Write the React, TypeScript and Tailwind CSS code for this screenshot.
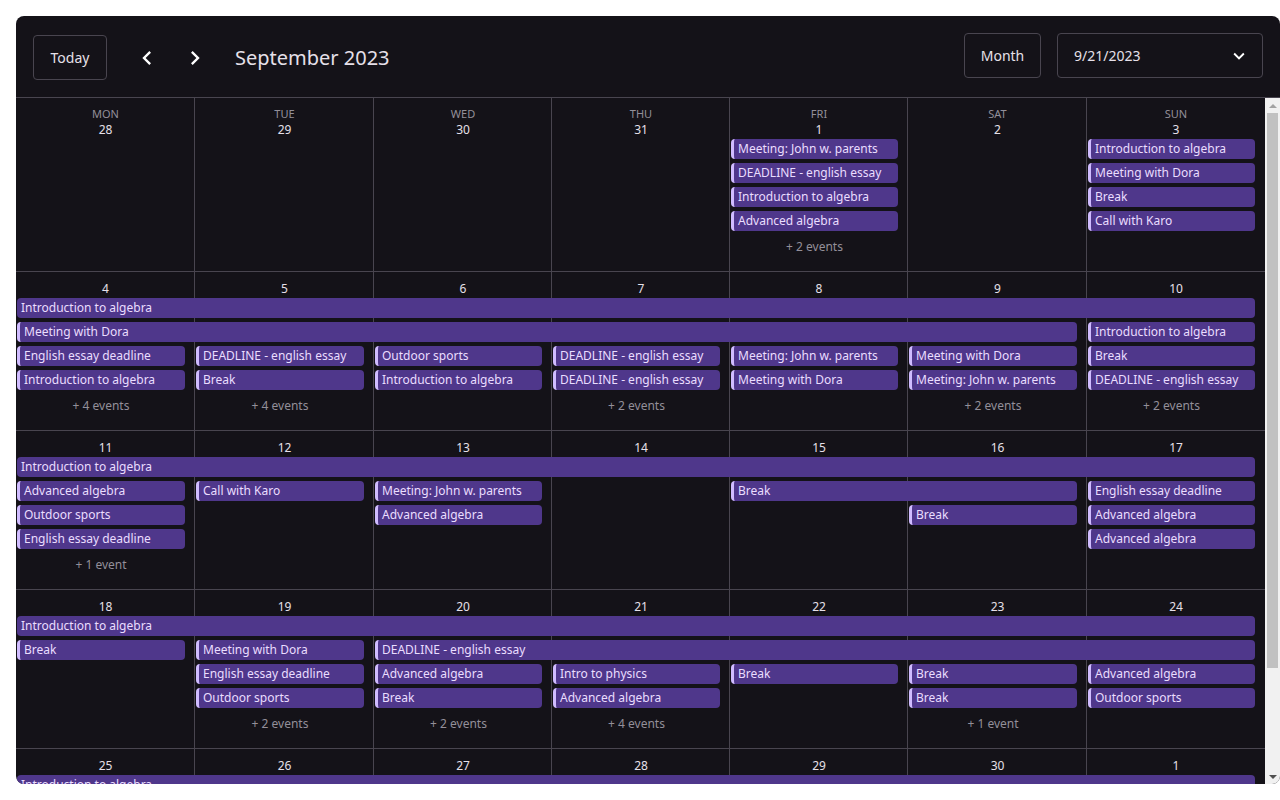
import clsx from 'clsx';

type CalEvent = {
  title: string;
  col: number;
  span?: number;
  lane: number;
  cont?: boolean;
};

type Week = {
  dates: string[];
  events: CalEvent[];
  more: Record<number, string>;
};

const DAY_NAMES = ['Mon', 'Tue', 'Wed', 'Thu', 'Fri', 'Sat', 'Sun'];

// full class names so tailwind picks them up
const COL_START = ['', 'col-start-1', 'col-start-2', 'col-start-3', 'col-start-4', 'col-start-5', 'col-start-6', 'col-start-7'];
const COL_SPAN = ['', 'col-span-1', 'col-span-2', 'col-span-3', 'col-span-4', 'col-span-5', 'col-span-6', 'col-span-7'];
const ROW_START = ['', 'row-start-1', 'row-start-2', 'row-start-3', 'row-start-4', 'row-start-5', 'row-start-6'];

const COLS = 'grid-cols-[179px_179px_178px_178px_178px_179px_178px]';

const weeks: Week[] = [
  {
    dates: ['28', '29', '30', '31', '1', '2', '3'],
    events: [
      { title: 'Meeting: John w. parents', col: 5, lane: 1 },
      { title: 'DEADLINE - english essay', col: 5, lane: 2 },
      { title: 'Introduction to algebra', col: 5, lane: 3 },
      { title: 'Advanced algebra', col: 5, lane: 4 },
      { title: 'Introduction to algebra', col: 7, lane: 1 },
      { title: 'Meeting with Dora', col: 7, lane: 2 },
      { title: 'Break', col: 7, lane: 3 },
      { title: 'Call with Karo', col: 7, lane: 4 },
    ],
    more: { 5: '+ 2 events' },
  },
  {
    dates: ['4', '5', '6', '7', '8', '9', '10'],
    events: [
      { title: 'Introduction to algebra', col: 1, span: 7, lane: 1, cont: true },
      { title: 'Meeting with Dora', col: 1, span: 6, lane: 2 },
      { title: 'Introduction to algebra', col: 7, lane: 2 },
      { title: 'English essay deadline', col: 1, lane: 3 },
      { title: 'DEADLINE - english essay', col: 2, lane: 3 },
      { title: 'Outdoor sports', col: 3, lane: 3 },
      { title: 'DEADLINE - english essay', col: 4, lane: 3 },
      { title: 'Meeting: John w. parents', col: 5, lane: 3 },
      { title: 'Meeting with Dora', col: 6, lane: 3 },
      { title: 'Break', col: 7, lane: 3 },
      { title: 'Introduction to algebra', col: 1, lane: 4 },
      { title: 'Break', col: 2, lane: 4 },
      { title: 'Introduction to algebra', col: 3, lane: 4 },
      { title: 'DEADLINE - english essay', col: 4, lane: 4 },
      { title: 'Meeting with Dora', col: 5, lane: 4 },
      { title: 'Meeting: John w. parents', col: 6, lane: 4 },
      { title: 'DEADLINE - english essay', col: 7, lane: 4 },
    ],
    more: { 1: '+ 4 events', 2: '+ 4 events', 4: '+ 2 events', 6: '+ 2 events', 7: '+ 2 events' },
  },
  {
    dates: ['11', '12', '13', '14', '15', '16', '17'],
    events: [
      { title: 'Introduction to algebra', col: 1, span: 7, lane: 1, cont: true },
      { title: 'Advanced algebra', col: 1, lane: 2 },
      { title: 'Call with Karo', col: 2, lane: 2 },
      { title: 'Meeting: John w. parents', col: 3, lane: 2 },
      { title: 'Break', col: 5, span: 2, lane: 2 },
      { title: 'English essay deadline', col: 7, lane: 2 },
      { title: 'Outdoor sports', col: 1, lane: 3 },
      { title: 'Advanced algebra', col: 3, lane: 3 },
      { title: 'Break', col: 6, lane: 3 },
      { title: 'Advanced algebra', col: 7, lane: 3 },
      { title: 'English essay deadline', col: 1, lane: 4 },
      { title: 'Advanced algebra', col: 7, lane: 4 },
    ],
    more: { 1: '+ 1 event' },
  },
  {
    dates: ['18', '19', '20', '21', '22', '23', '24'],
    events: [
      { title: 'Introduction to algebra', col: 1, span: 7, lane: 1, cont: true },
      { title: 'Break', col: 1, lane: 2 },
      { title: 'Meeting with Dora', col: 2, lane: 2 },
      { title: 'DEADLINE - english essay', col: 3, span: 5, lane: 2 },
      { title: 'English essay deadline', col: 2, lane: 3 },
      { title: 'Advanced algebra', col: 3, lane: 3 },
      { title: 'Intro to physics', col: 4, lane: 3 },
      { title: 'Break', col: 5, lane: 3 },
      { title: 'Break', col: 6, lane: 3 },
      { title: 'Advanced algebra', col: 7, lane: 3 },
      { title: 'Outdoor sports', col: 2, lane: 4 },
      { title: 'Break', col: 3, lane: 4 },
      { title: 'Advanced algebra', col: 4, lane: 4 },
      { title: 'Break', col: 6, lane: 4 },
      { title: 'Outdoor sports', col: 7, lane: 4 },
    ],
    more: { 2: '+ 2 events', 3: '+ 2 events', 4: '+ 4 events', 6: '+ 1 event' },
  },
  {
    dates: ['25', '26', '27', '28', '29', '30', '1'],
    events: [
      { title: 'Introduction to algebra', col: 1, span: 7, lane: 1, cont: true },
      { title: 'Meeting with Dora', col: 1, lane: 2 },
      { title: 'Break', col: 2, lane: 2 },
      { title: 'Advanced algebra', col: 4, lane: 2 },
      { title: 'Call with Karo', col: 6, lane: 2 },
    ],
    more: {},
  },
];

function ChevronIcon({ dir }: { dir: 'left' | 'right' }) {
  return (
    <svg width="28" height="28" viewBox="0 0 24 24" fill="currentColor">
      {dir === 'left' ? (
        <path d="M15.41 7.41 14 6l-6 6 6 6 1.41-1.41L10.83 12z" />
      ) : (
        <path d="M8.59 16.59 10 18l6-6-6-6-1.41 1.41L13.17 12z" />
      )}
    </svg>
  );
}

function EventChip({ event }: { event: CalEvent }) {
  const span = event.span ?? 1;
  return (
    <div
      className={clsx(
        COL_START[event.col],
        COL_SPAN[span],
        ROW_START[event.lane + 1],
        'ml-px mr-[10px] h-[20px] truncate rounded-[4px] bg-[#4f378b] pl-[4px] text-[12px] leading-[20px] text-[#eaddff]',
        !event.cont && 'border-l-[3px] border-[#d0bcff]'
      )}
    >
      {event.title}
    </div>
  );
}

function WeekRow({ week, first }: { week: Week; first: boolean }) {
  return (
    <div className={clsx('relative shrink-0', first ? 'h-[173px]' : 'h-[159px] border-t border-[#49454f]')}>
      <div className={clsx('absolute inset-0 grid', COLS)}>
        {DAY_NAMES.map((d, i) => (
          <div key={d} className={clsx(i < 6 && 'border-r border-[#49454f]')} />
        ))}
      </div>
      <div
        className={clsx(
          'relative grid',
          COLS,
          first ? 'grid-rows-[41px_repeat(4,24px)_24px]' : 'grid-rows-[26px_repeat(4,24px)_24px]'
        )}
      >
        {week.dates.map((date, i) => (
          <div
            key={'d' + i}
            className={clsx(
              COL_START[i + 1],
              'row-start-1 flex flex-col items-center',
              first ? 'pt-[8px]' : 'pt-[9px]'
            )}
          >
            {first && (
              <div className="text-[11px] uppercase leading-[16px] text-[#938f99]">{DAY_NAMES[i]}</div>
            )}
            <div className="text-[12px] leading-[16px] text-[#e6e0e9]">{date}</div>
          </div>
        ))}
        {week.events.map((ev, i) => (
          <EventChip key={'e' + i} event={ev} />
        ))}
        {Object.entries(week.more).map(([col, label]) => (
          <div
            key={'m' + col}
            className={clsx(
              COL_START[Number(col)],
              'row-start-6 ml-px mr-[10px] flex items-center justify-center text-[12px] text-[#938f99]'
            )}
          >
            {label}
          </div>
        ))}
      </div>
    </div>
  );
}

function ScrollBar() {
  return (
    <div className="flex w-[15px] shrink-0 flex-col bg-[#f1f1f1]">
      <div className="flex h-[15px] items-center justify-center">
        <div className="h-0 w-0 border-x-[4px] border-b-[4px] border-x-transparent border-b-[#a3a3a3]" />
      </div>
      <div className="mx-[2px] h-[555px] bg-[#c1c1c1]" />
      <div className="flex-1" />
      <div className="flex h-[15px] items-center justify-center">
        <div className="h-0 w-0 border-x-[4px] border-t-[4px] border-x-transparent border-t-[#505050]" />
      </div>
    </div>
  );
}

export default function App() {
  return (
    <div className="min-h-screen bg-white pl-4 pt-4 font-['Noto_Sans',sans-serif]">
      <div className="flex h-[768px] w-[1264px] flex-col overflow-hidden rounded-lg bg-[#141218]">
        <div className="flex h-[82px] shrink-0 items-center justify-between border-b border-[#49454f] pl-[17px] pr-[17px]">
          <div className="mt-[2px] flex items-center">
            <button className="h-[45px] w-[74px] rounded-[4px] border border-[#49454f] text-[14px] text-[#e6e0e9]">
              Today
            </button>
            <button className="ml-[20px] flex h-[40px] w-[40px] items-center justify-center text-white">
              <ChevronIcon dir="left" />
            </button>
            <button className="ml-[8px] flex h-[40px] w-[40px] items-center justify-center text-white">
              <ChevronIcon dir="right" />
            </button>
            <div className="ml-[20px] text-[20px] text-[#e6e0e9]">September 2023</div>
          </div>
          <div className="mb-[2px] flex items-center gap-4">
            <button className="h-[45px] w-[77px] rounded-[4px] border border-[#49454f] text-[14px] text-[#e6e0e9]">
              Month
            </button>
            <div className="flex h-[45px] w-[206px] items-center justify-between rounded-[4px] border border-[#49454f] pl-[16px] pr-[12px] text-[14px] text-[#e6e0e9]">
              <span>9/21/2023</span>
              <svg width="22" height="22" viewBox="0 0 24 24" fill="currentColor" className="text-white">
                <path d="M16.59 8.59 12 13.17 7.41 8.59 6 10l6 6 6-6z" />
              </svg>
            </div>
          </div>
        </div>
        <div className="flex min-h-0 flex-1">
          <div className="flex min-w-0 flex-1 flex-col overflow-hidden">
            {weeks.map((week, i) => (
              <WeekRow key={i} week={week} first={i === 0} />
            ))}
          </div>
          <ScrollBar />
        </div>
      </div>
    </div>
  );
}
